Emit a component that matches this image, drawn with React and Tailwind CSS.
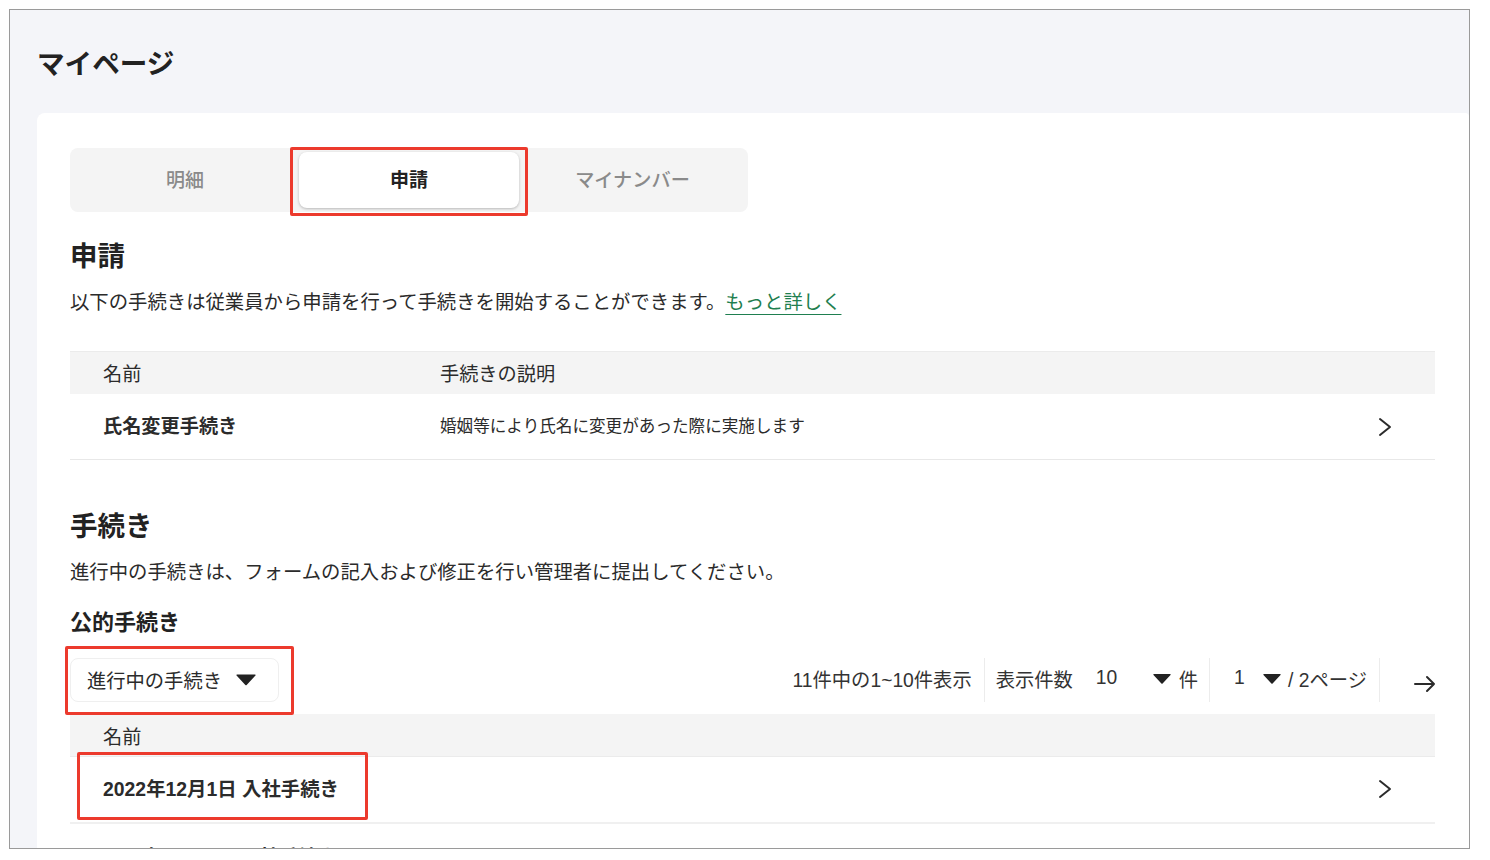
import React from "react";

const Chevron = () => (
  <svg width="14" height="20" viewBox="0 0 14 20" fill="none" stroke="#2b2b2b" strokeWidth="2" strokeLinecap="round" strokeLinejoin="round">
    <path d="M2 2l10 8-10 8" />
  </svg>
);

const Tri = ({ w = 18, h = 11 }) => (
  <svg width={w} height={h} viewBox="0 0 18 11" fill="#222">
    <path d="M1 1h16a.6.6 0 0 1 .5 1L9.6 10.4a.8.8 0 0 1-1.2 0L.5 2A.6.6 0 0 1 1 1z" />
  </svg>
);

export default function App() {
  return (
    <div className="w-[1490px] h-[860px] bg-white pl-[9px] pt-[9px] overflow-hidden" style={{ fontFamily: '"Liberation Sans","Noto Sans CJK JP",sans-serif' }}>
      <div className="w-[1461px] h-[840px] border border-[#9a9a9a] bg-[#f4f5f9] overflow-hidden text-[#2b2b2b]">
        <h1 className="h-[103px] pl-[27px] pt-[35px] text-[27.6px] leading-[40px] font-bold text-[#222]">マイページ</h1>
        <div className="ml-[27px] h-[760px] bg-white rounded-tl-lg rounded-tr-sm pl-[33px] pr-[34px] pt-[35px]">
          {/* tabs */}
          <div className="relative w-[678px] h-[64px] bg-[#f4f4f4] rounded-lg flex items-center text-[19px] font-medium text-[#8a8a8a]">
            <div className="w-[226px] text-center pl-[4px] pt-[2px]">明細</div>
            <div className="w-[226px] flex justify-center">
              <div className="w-[220px] h-[56px] bg-white rounded-lg shadow-[0_1px_3px_rgba(0,0,0,0.25)] flex items-center justify-center font-bold text-[#222] pt-[2px]">申請</div>
            </div>
            <div className="w-[226px] text-center text-[19.2px] pr-[5px] pt-[2px]">マイナンバー</div>
            <div className="absolute left-[220px] top-[-1px] w-[238px] h-[69px] border-[3px] border-[#ec3a2d] rounded-[2px]"></div>
          </div>

          <h2 className="mt-[25px] text-[27.5px] leading-[40px] font-bold text-[#222]">申請</h2>
          <p className="mt-[11px] text-[19.38px] leading-[28px]">
            以下の手続きは従業員から申請を行って手続きを開始することができます。
            <a className="text-[#1f7f50] underline underline-offset-[5px]">もっと詳しく</a>
          </p>

          <div className="mt-[35px] h-[43px] bg-[#f4f4f4] border-t border-[#ebebeb] flex items-center text-[19.2px] pt-[4px]">
            <div className="w-[370px] pl-[33px]">名前</div>
            <div>手続きの説明</div>
          </div>
          <div className="h-[66px] border-b border-[#e8e8e8] flex items-center">
            <div className="w-[370px] pl-[33px] text-[19.2px] font-bold pt-[2px]">氏名変更手続き</div>
            <div className="text-[16.6px] flex-1 pt-[2px]">婚姻等により氏名に変更があった際に実施します</div>
            <div className="pr-[43px] flex"><Chevron /></div>
          </div>

          <h2 className="mt-[47px] text-[27.5px] leading-[40px] font-bold text-[#222]">手続き</h2>
          <p className="mt-[11px] text-[19.38px] leading-[28px]">進行中の手続きは、フォームの記入および修正を行い管理者に提出してください。</p>
          <h3 className="mt-[21px] text-[22px] leading-[32px] font-bold text-[#222]">公的手続き</h3>

          {/* toolbar */}
          <div className="mt-[19px] h-[56px] flex items-start justify-between">
            <div className="relative w-[209px] h-[44px] border border-[#efefef] rounded-lg flex items-center pl-[16px] text-[19.3px]">
              <span className="pt-[4px]">進行中の手続き</span>
              <span className="ml-[14px] flex pb-[2px]"><Tri w={20} h={13} /></span>
              <div className="absolute left-[-6px] top-[-13px] w-[229px] h-[69px] border-[3px] border-[#ec3a2d] rounded-[2px]"></div>
            </div>
            <div className="flex items-center h-[44px] text-[19.3px] text-[#333] mr-[-1px]">
              <div className="h-[44px] flex items-center pr-[12px] pt-[2px] border-r border-[#ececec]">11件中の1~10件表示</div>
              <div className="h-[44px] flex items-center pl-[11px] pr-[11px] border-r border-[#ececec]">
                <span className="pt-[2px]">表示件数</span>
                <span className="ml-[23px] w-[57px] pb-[4px]">10</span>
                <span className="flex pb-[3px]"><Tri w={18} h={11} /></span>
                <span className="ml-[8px] pt-[2px]">件</span>
              </div>
              <div className="h-[44px] flex items-center pl-[24px] pr-[12px] border-r border-[#ececec]">
                <span className="w-[29px] pb-[4px]">1</span>
                <span className="flex pb-[3px]"><Tri w={18} h={11} /></span>
                <span className="ml-[7px] pt-[2px]">/ 2ページ</span>
              </div>
              <div className="pl-[34px] flex pt-[7px]">
                <svg width="22" height="18" viewBox="0 0 22 18" fill="none" stroke="#2b2b2b" strokeWidth="2" strokeLinecap="round" strokeLinejoin="round">
                  <path d="M1 9h19M13 2l7 7-7 7" />
                </svg>
              </div>
            </div>
          </div>

          <div className="h-[43px] bg-[#f4f4f4] border-b border-[#ebebeb] flex items-center text-[19.2px] pt-[6px]">
            <div className="pl-[33px]">名前</div>
          </div>
          <div className="relative h-[67px] border-b-2 border-[#f0f0f0] flex items-center justify-between">
            <div className="pl-[33px] text-[19.4px] font-bold">2022年12月1日 入社手続き</div>
            <div className="pr-[43px] flex pb-[2px]"><Chevron /></div>
            <div className="absolute left-[7px] top-[-5px] w-[291px] h-[68px] border-[3px] border-[#ec3a2d] rounded-[2px]"></div>
          </div>
          <div className="mt-[20px] pl-[33px] text-[19.2px] font-bold leading-[28px]">2022年10月1日 入社手続き</div>
        </div>
      </div>
    </div>
  );
}
